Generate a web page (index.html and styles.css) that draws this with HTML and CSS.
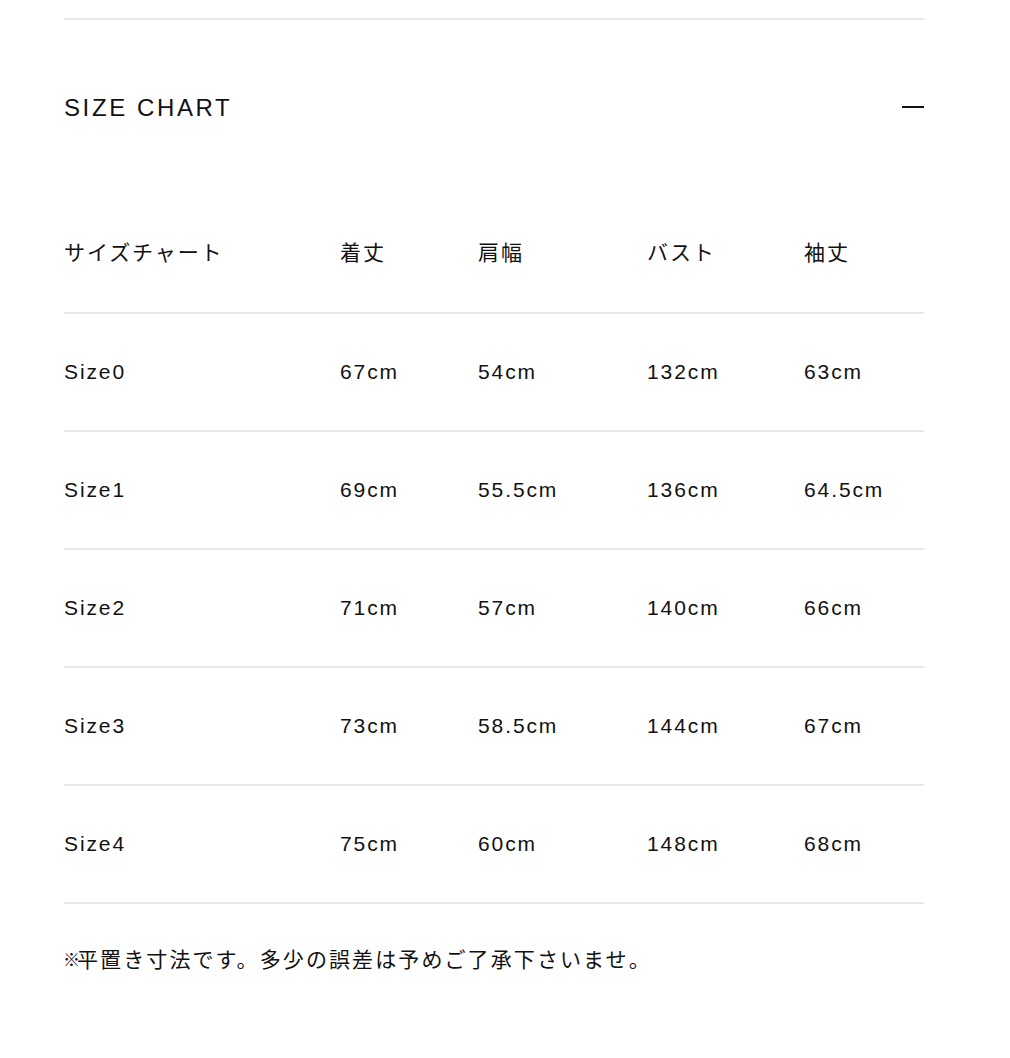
FILE: index.html
```html
<!DOCTYPE html>
<html lang="ja">
<head>
<meta charset="utf-8">
<title>Size Chart</title>
<link rel="stylesheet" href="styles.css">
</head>
<body>
<div class="wrap">
  <section class="accordion">
    <div class="acc-head">
      <h2 class="acc-title">SIZE CHART</h2>
      <span class="acc-toggle" aria-hidden="true"></span>
    </div>
    <table class="chart">
      <colgroup>
        <col class="c1"><col class="c2"><col class="c3"><col class="c4"><col class="c5">
      </colgroup>
      <thead>
        <tr><th>サイズチャート</th><th>着丈</th><th>肩幅</th><th>バスト</th><th>袖丈</th></tr>
      </thead>
      <tbody>
        <tr><td>Size0</td><td>67cm</td><td>54cm</td><td>132cm</td><td>63cm</td></tr>
        <tr><td>Size1</td><td>69cm</td><td>55.5cm</td><td>136cm</td><td>64.5cm</td></tr>
        <tr><td>Size2</td><td>71cm</td><td>57cm</td><td>140cm</td><td>66cm</td></tr>
        <tr><td>Size3</td><td>73cm</td><td>58.5cm</td><td>144cm</td><td>67cm</td></tr>
        <tr><td>Size4</td><td>75cm</td><td>60cm</td><td>148cm</td><td>68cm</td></tr>
      </tbody>
    </table>
    <p class="note"><span class="note-mark">※</span>平置き寸法です。多少の誤差は予めご了承下さいませ。</p>
  </section>
</div>
</body>
</html>
```

FILE: styles.css
```css
html, body {
  margin: 0;
  padding: 0;
  background: #fff;
}
body {
  font-family: "Liberation Sans", "Noto Sans CJK JP", sans-serif;
  color: #111;
}
.wrap {
  width: 860px;
  margin-left: 64px;
  padding-top: 18px;
}
.accordion {
  border-top: 2px solid #e8e8e8;
}
.acc-head {
  height: 176px;
  display: flex;
  align-items: center;
  justify-content: space-between;
}
.acc-title {
  margin: 0;
  font-size: 24px;
  font-weight: 400;
  letter-spacing: 2.6px;
  line-height: 1;
}
.acc-toggle {
  width: 22px;
  height: 2px;
  background: #111;
  margin-top: -2px;
}
.chart {
  width: 860px;
  border-collapse: separate;
  border-spacing: 0;
  table-layout: fixed;
}
.c1 { width: 276px; }
.c2 { width: 138px; }
.c3 { width: 169px; }
.c4 { width: 157px; }
.c5 { width: 120px; }
.chart th,
.chart td {
  height: 116px;
  padding: 0;
  text-align: left;
  vertical-align: middle;
  font-size: 21px;
  font-weight: 400;
  letter-spacing: 1.9px;
  line-height: 30px;
  border-bottom: 2px solid #e8e8e8;
  white-space: nowrap;
}
.chart th {
  padding-bottom: 3px;
  height: 113px;
}
.note {
  margin: 41px 0 0;
  font-size: 21px;
  letter-spacing: 2.1px;
  line-height: 30px;
}
.note-mark {
  font-size: 17px;
  letter-spacing: -3px;
  margin-left: -1px;
  vertical-align: 1px;
}
```
